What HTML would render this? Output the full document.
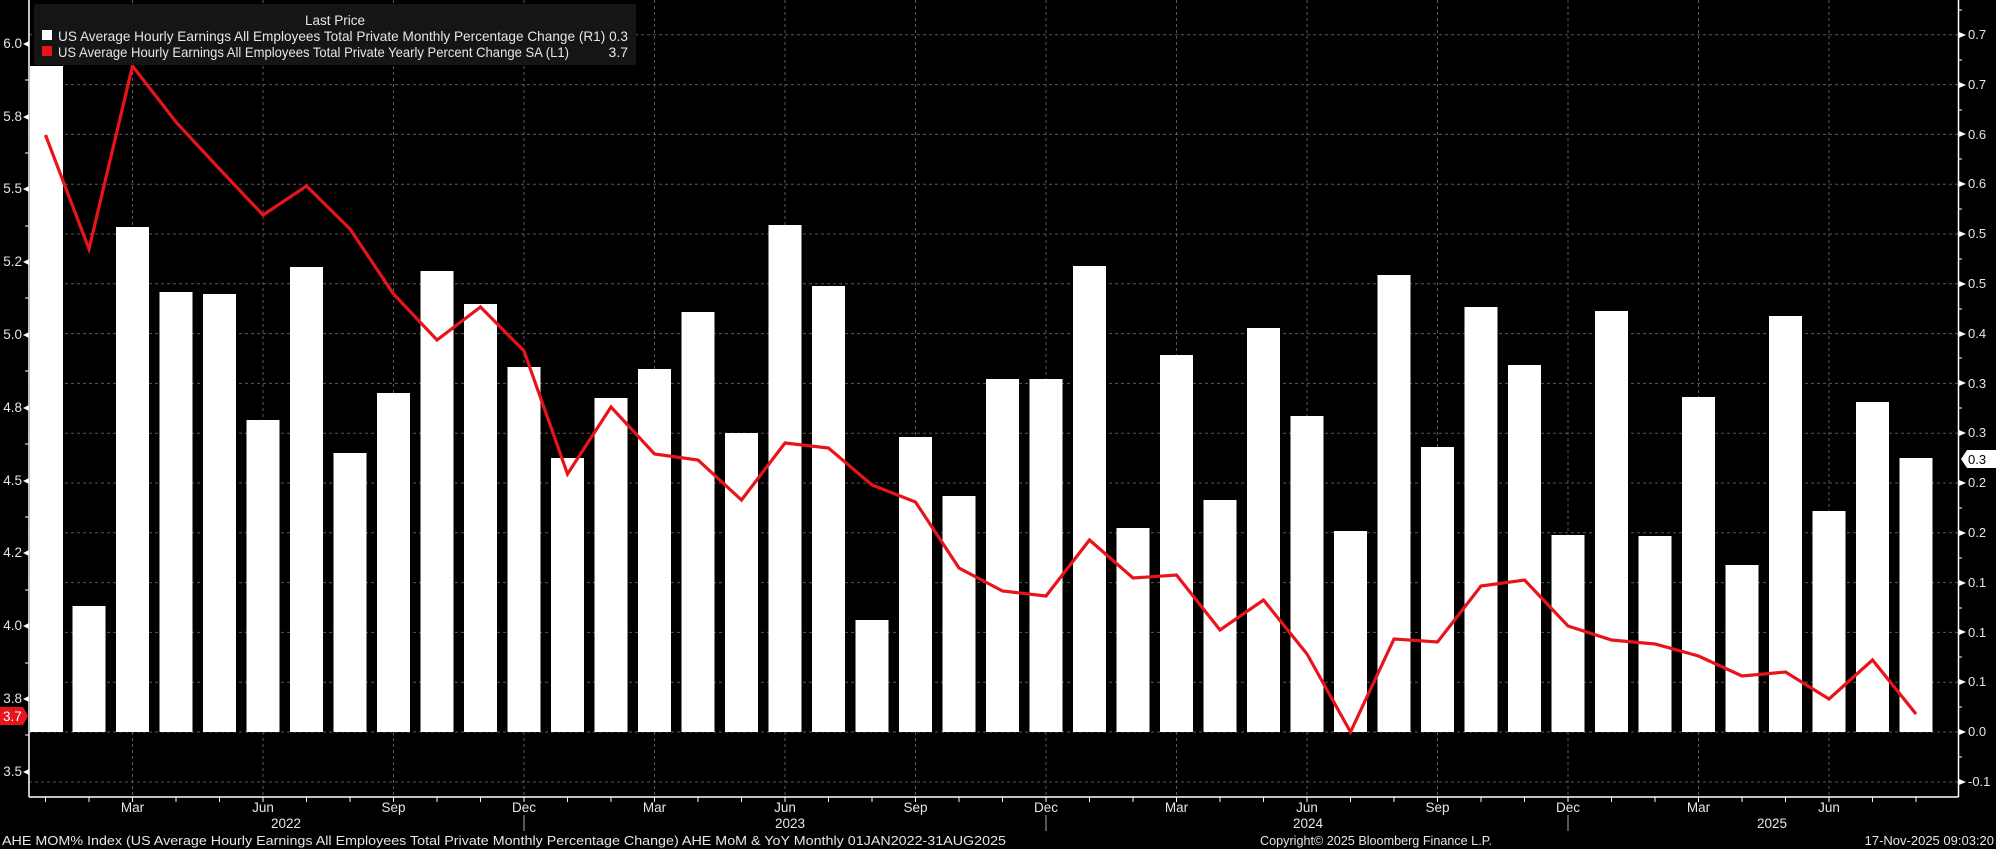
<!DOCTYPE html>
<html><head><meta charset="utf-8"><style>
html,body{margin:0;padding:0;background:#000;}
svg{display:block;}
text{font-family:"Liberation Sans",sans-serif;fill:#e6e6e6;}
</style></head><body>
<svg width="1996" height="849" viewBox="0 0 1996 849" xmlns="http://www.w3.org/2000/svg">
<rect width="1996" height="849" fill="#000"/>
<g stroke="#777" stroke-width="1" stroke-dasharray="3,3" opacity="0.75">
<line x1="132.5" y1="0" x2="132.5" y2="797"/><line x1="263" y1="0" x2="263" y2="797"/><line x1="393.5" y1="0" x2="393.5" y2="797"/><line x1="524" y1="0" x2="524" y2="797"/><line x1="654.5" y1="0" x2="654.5" y2="797"/><line x1="785" y1="0" x2="785" y2="797"/><line x1="915.5" y1="0" x2="915.5" y2="797"/><line x1="1046" y1="0" x2="1046" y2="797"/><line x1="1176.5" y1="0" x2="1176.5" y2="797"/><line x1="1307" y1="0" x2="1307" y2="797"/><line x1="1437.5" y1="0" x2="1437.5" y2="797"/><line x1="1568" y1="0" x2="1568" y2="797"/><line x1="1698.5" y1="0" x2="1698.5" y2="797"/><line x1="1829" y1="0" x2="1829" y2="797"/>
<line x1="29" y1="782" x2="1958" y2="782"/><line x1="29" y1="732" x2="1958" y2="732"/><line x1="29" y1="682.2" x2="1958" y2="682.2"/><line x1="29" y1="632.4" x2="1958" y2="632.4"/><line x1="29" y1="582.6" x2="1958" y2="582.6"/><line x1="29" y1="532.8" x2="1958" y2="532.8"/><line x1="29" y1="483" x2="1958" y2="483"/><line x1="29" y1="433.2" x2="1958" y2="433.2"/><line x1="29" y1="383.4" x2="1958" y2="383.4"/><line x1="29" y1="333.6" x2="1958" y2="333.6"/><line x1="29" y1="283.8" x2="1958" y2="283.8"/><line x1="29" y1="234" x2="1958" y2="234"/><line x1="29" y1="184.2" x2="1958" y2="184.2"/><line x1="29" y1="134.4" x2="1958" y2="134.4"/><line x1="29" y1="84.6" x2="1958" y2="84.6"/><line x1="29" y1="34.8" x2="1958" y2="34.8"/>
</g>
<g fill="#fff">
<rect x="30" y="66" width="33" height="666"/>
<rect x="72.5" y="606" width="33" height="126"/>
<rect x="116" y="227" width="33" height="505"/>
<rect x="159.5" y="292" width="33" height="440"/>
<rect x="203" y="294" width="33" height="438"/>
<rect x="246.5" y="420" width="33" height="312"/>
<rect x="290" y="267" width="33" height="465"/>
<rect x="333.5" y="453" width="33" height="279"/>
<rect x="377" y="393" width="33" height="339"/>
<rect x="420.5" y="271" width="33" height="461"/>
<rect x="464" y="304" width="33" height="428"/>
<rect x="507.5" y="367" width="33" height="365"/>
<rect x="551" y="458" width="33" height="274"/>
<rect x="594.5" y="398" width="33" height="334"/>
<rect x="638" y="369" width="33" height="363"/>
<rect x="681.5" y="312" width="33" height="420"/>
<rect x="725" y="433" width="33" height="299"/>
<rect x="768.5" y="225" width="33" height="507"/>
<rect x="812" y="286" width="33" height="446"/>
<rect x="855.5" y="620" width="33" height="112"/>
<rect x="899" y="437" width="33" height="295"/>
<rect x="942.5" y="496" width="33" height="236"/>
<rect x="986" y="379" width="33" height="353"/>
<rect x="1029.5" y="379" width="33" height="353"/>
<rect x="1073" y="266" width="33" height="466"/>
<rect x="1116.5" y="528" width="33" height="204"/>
<rect x="1160" y="355" width="33" height="377"/>
<rect x="1203.5" y="500" width="33" height="232"/>
<rect x="1247" y="328" width="33" height="404"/>
<rect x="1290.5" y="416" width="33" height="316"/>
<rect x="1334" y="531" width="33" height="201"/>
<rect x="1377.5" y="275" width="33" height="457"/>
<rect x="1421" y="447" width="33" height="285"/>
<rect x="1464.5" y="307" width="33" height="425"/>
<rect x="1508" y="365" width="33" height="367"/>
<rect x="1551.5" y="535" width="33" height="197"/>
<rect x="1595" y="311" width="33" height="421"/>
<rect x="1638.5" y="536" width="33" height="196"/>
<rect x="1682" y="397" width="33" height="335"/>
<rect x="1725.5" y="565" width="33" height="167"/>
<rect x="1769" y="316" width="33" height="416"/>
<rect x="1812.5" y="511" width="33" height="221"/>
<rect x="1856" y="402" width="33" height="330"/>
<rect x="1899.5" y="458" width="33" height="274"/>
</g>
<polyline fill="none" stroke="#e8141b" stroke-width="3.2" stroke-linejoin="miter" points="45.5,135 89,249 132.5,66 176,122 219.5,169 263,215 306.5,186 350,229 393.5,294 437,340 480.5,307 524,351 567.5,474 611,407 654.5,454 698,460 741.5,500 785,443 828.5,448 872,485 915.5,502 959,568 1002.5,591 1046,596 1089.5,540 1133,578 1176.5,575 1220,630 1263.5,600 1307,654 1350.5,732 1394,639 1437.5,642 1481,586 1524.5,580 1568,626 1611.5,640 1655,644 1698.5,656 1742,676 1785.5,672 1829,699 1872.5,660 1916,714"/>
<g stroke="#fff" stroke-width="1.5">
<line x1="29" y1="0" x2="29" y2="797"/>
<line x1="1958.5" y1="0" x2="1958.5" y2="797"/>
<line x1="29" y1="797" x2="1958.5" y2="797"/>
</g>
<g stroke="#fff" stroke-width="1">
<line x1="45.5" y1="797" x2="45.5" y2="802"/><line x1="89" y1="797" x2="89" y2="802"/><line x1="132.5" y1="797" x2="132.5" y2="802"/><line x1="176" y1="797" x2="176" y2="802"/><line x1="219.5" y1="797" x2="219.5" y2="802"/><line x1="263" y1="797" x2="263" y2="802"/><line x1="306.5" y1="797" x2="306.5" y2="802"/><line x1="350" y1="797" x2="350" y2="802"/><line x1="393.5" y1="797" x2="393.5" y2="802"/><line x1="437" y1="797" x2="437" y2="802"/><line x1="480.5" y1="797" x2="480.5" y2="802"/><line x1="524" y1="797" x2="524" y2="802"/><line x1="567.5" y1="797" x2="567.5" y2="802"/><line x1="611" y1="797" x2="611" y2="802"/><line x1="654.5" y1="797" x2="654.5" y2="802"/><line x1="698" y1="797" x2="698" y2="802"/><line x1="741.5" y1="797" x2="741.5" y2="802"/><line x1="785" y1="797" x2="785" y2="802"/><line x1="828.5" y1="797" x2="828.5" y2="802"/><line x1="872" y1="797" x2="872" y2="802"/><line x1="915.5" y1="797" x2="915.5" y2="802"/><line x1="959" y1="797" x2="959" y2="802"/><line x1="1002.5" y1="797" x2="1002.5" y2="802"/><line x1="1046" y1="797" x2="1046" y2="802"/><line x1="1089.5" y1="797" x2="1089.5" y2="802"/><line x1="1133" y1="797" x2="1133" y2="802"/><line x1="1176.5" y1="797" x2="1176.5" y2="802"/><line x1="1220" y1="797" x2="1220" y2="802"/><line x1="1263.5" y1="797" x2="1263.5" y2="802"/><line x1="1307" y1="797" x2="1307" y2="802"/><line x1="1350.5" y1="797" x2="1350.5" y2="802"/><line x1="1394" y1="797" x2="1394" y2="802"/><line x1="1437.5" y1="797" x2="1437.5" y2="802"/><line x1="1481" y1="797" x2="1481" y2="802"/><line x1="1524.5" y1="797" x2="1524.5" y2="802"/><line x1="1568" y1="797" x2="1568" y2="802"/><line x1="1611.5" y1="797" x2="1611.5" y2="802"/><line x1="1655" y1="797" x2="1655" y2="802"/><line x1="1698.5" y1="797" x2="1698.5" y2="802"/><line x1="1742" y1="797" x2="1742" y2="802"/><line x1="1785.5" y1="797" x2="1785.5" y2="802"/><line x1="1829" y1="797" x2="1829" y2="802"/><line x1="1872.5" y1="797" x2="1872.5" y2="802"/><line x1="1916" y1="797" x2="1916" y2="802"/>
<line x1="524" y1="815" x2="524" y2="831" stroke="#aaa"/><line x1="1046" y1="815" x2="1046" y2="831" stroke="#aaa"/><line x1="1568" y1="815" x2="1568" y2="831" stroke="#aaa"/>
<line x1="1958" y1="757" x2="1962" y2="757"/><line x1="1958" y1="707" x2="1962" y2="707"/><line x1="1958" y1="657" x2="1962" y2="657"/><line x1="1958" y1="608" x2="1962" y2="608"/><line x1="1958" y1="558" x2="1962" y2="558"/><line x1="1958" y1="508" x2="1962" y2="508"/><line x1="1958" y1="408" x2="1962" y2="408"/><line x1="1958" y1="358" x2="1962" y2="358"/><line x1="1958" y1="309" x2="1962" y2="309"/><line x1="1958" y1="259" x2="1962" y2="259"/><line x1="1958" y1="209" x2="1962" y2="209"/><line x1="1958" y1="159" x2="1962" y2="159"/><line x1="1958" y1="110" x2="1962" y2="110"/><line x1="1958" y1="60" x2="1962" y2="60"/><line x1="1958" y1="10" x2="1962" y2="10"/>
<line x1="25" y1="80" x2="29" y2="80"/><line x1="25" y1="153" x2="29" y2="153"/><line x1="25" y1="226" x2="29" y2="226"/><line x1="25" y1="298" x2="29" y2="298"/><line x1="25" y1="371" x2="29" y2="371"/><line x1="25" y1="444" x2="29" y2="444"/><line x1="25" y1="517" x2="29" y2="517"/><line x1="25" y1="590" x2="29" y2="590"/><line x1="25" y1="663" x2="29" y2="663"/><line x1="25" y1="735" x2="29" y2="735"/>
</g>
<g fill="#fff">
<path d="M1959,779 L1966,782 L1959,785Z"/><path d="M1959,729 L1966,732 L1959,735Z"/><path d="M1959,679 L1966,682 L1959,685Z"/><path d="M1959,629 L1966,632 L1959,635Z"/><path d="M1959,580 L1966,583 L1959,586Z"/><path d="M1959,530 L1966,533 L1959,536Z"/><path d="M1959,480 L1966,483 L1959,486Z"/><path d="M1959,430 L1966,433 L1959,436Z"/><path d="M1959,380 L1966,383 L1959,386Z"/><path d="M1959,331 L1966,334 L1959,337Z"/><path d="M1959,281 L1966,284 L1959,287Z"/><path d="M1959,231 L1966,234 L1959,237Z"/><path d="M1959,181 L1966,184 L1959,187Z"/><path d="M1959,131 L1966,134 L1959,137Z"/><path d="M1959,82 L1966,85 L1959,88Z"/><path d="M1959,32 L1966,35 L1959,38Z"/>
<path d="M29,41 L23,44 L29,47Z"/><path d="M29,114 L23,117 L29,120Z"/><path d="M29,186 L23,189 L29,192Z"/><path d="M29,259 L23,262 L29,265Z"/><path d="M29,332 L23,335 L29,338Z"/><path d="M29,405 L23,408 L29,411Z"/><path d="M29,478 L23,481 L29,484Z"/><path d="M29,550 L23,553 L29,556Z"/><path d="M29,623 L23,626 L29,629Z"/><path d="M29,696 L23,699 L29,702Z"/><path d="M29,769 L23,772 L29,775Z"/>
</g>
<g font-size="13">
<text x="1968" y="786">-0.1</text><text x="1968" y="736">0.0</text><text x="1968" y="686">0.1</text><text x="1968" y="637">0.1</text><text x="1968" y="587">0.1</text><text x="1968" y="537">0.2</text><text x="1968" y="487">0.2</text><text x="1968" y="437">0.3</text><text x="1968" y="388">0.3</text><text x="1968" y="338">0.4</text><text x="1968" y="288">0.5</text><text x="1968" y="238">0.5</text><text x="1968" y="188">0.6</text><text x="1968" y="139">0.6</text><text x="1968" y="89">0.7</text><text x="1968" y="39">0.7</text>
</g>
<path d="M1961,459 L1967,450 L1996,450 L1996,468 L1967,468Z" fill="#fff"/>
<text x="1968" y="464" font-size="13" style="fill:#000">0.3</text>
<g font-size="13.5" text-anchor="end">
<text x="22" y="48">6.0</text><text x="22" y="121">5.8</text><text x="22" y="193">5.5</text><text x="22" y="266">5.2</text><text x="22" y="339">5.0</text><text x="22" y="412">4.8</text><text x="22" y="485">4.5</text><text x="22" y="557">4.2</text><text x="22" y="630">4.0</text><text x="22" y="703">3.8</text><text x="22" y="776">3.5</text>
</g>
<path d="M0,707 L23,707 L28,716 L23,725 L0,725Z" fill="#e8141b"/>
<text x="3" y="721" font-size="13.5" style="fill:#fff">3.7</text>
<rect x="34" y="4" width="602" height="61" rx="2" fill="#161616" opacity="0.95"/>
<text x="335" y="25" font-size="13.5" text-anchor="middle">Last Price</text>
<rect x="42" y="30" width="10" height="10" fill="#fff"/>
<rect x="42" y="46" width="10" height="10" fill="#e8141b"/>
<text x="58" y="41" font-size="14" textLength="570" lengthAdjust="spacingAndGlyphs">US Average Hourly Earnings All Employees Total Private Monthly Percentage Change  (R1) 0.3</text>
<text x="58" y="57" font-size="14" textLength="511" lengthAdjust="spacingAndGlyphs">US Average Hourly Earnings All Employees Total Private Yearly Percent Change SA  (L1)</text>
<text x="628" y="57" font-size="14" text-anchor="end">3.7</text>
<g font-size="13.5" text-anchor="middle">
<text x="132.5" y="812">Mar</text><text x="263" y="812">Jun</text><text x="393.5" y="812">Sep</text><text x="524" y="812">Dec</text><text x="654.5" y="812">Mar</text><text x="785" y="812">Jun</text><text x="915.5" y="812">Sep</text><text x="1046" y="812">Dec</text><text x="1176.5" y="812">Mar</text><text x="1307" y="812">Jun</text><text x="1437.5" y="812">Sep</text><text x="1568" y="812">Dec</text><text x="1698.5" y="812">Mar</text><text x="1829" y="812">Jun</text>
<text x="286" y="828">2022</text><text x="790" y="828">2023</text><text x="1308" y="828">2024</text><text x="1772" y="828">2025</text>
</g>
<text x="2" y="845" font-size="13" textLength="1004" lengthAdjust="spacingAndGlyphs">AHE MOM% Index (US Average Hourly Earnings All Employees Total Private Monthly Percentage Change) AHE MoM &amp; YoY Monthly 01JAN2022-31AUG2025</text>
<text x="1260" y="845" font-size="13" textLength="232" lengthAdjust="spacingAndGlyphs">Copyright© 2025 Bloomberg Finance L.P.</text>
<text x="1994" y="845" font-size="13" text-anchor="end">17-Nov-2025 09:03:20</text>
</svg>
</body></html>
